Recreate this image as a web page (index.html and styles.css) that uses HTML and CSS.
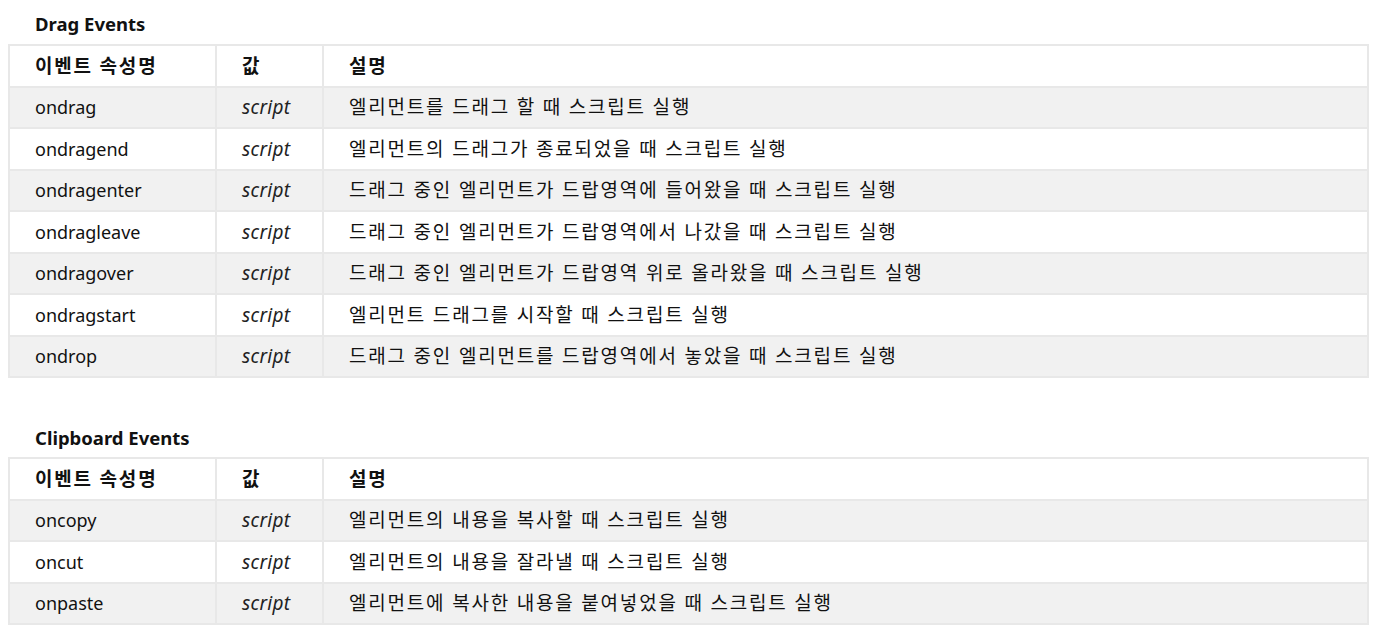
FILE: index.html
```html
<!DOCTYPE html>
<html lang="ko">
<head>
<meta charset="utf-8">
<link rel="stylesheet" href="styles.css">
</head>
<body>
<section class="group">
  <h3 class="title">Drag Events</h3>
  <table class="events">
    <colgroup><col class="c1"><col class="c2"><col></colgroup>
    <thead><tr><th>이벤트 속성명</th><th>값</th><th>설명</th></tr></thead>
    <tbody>
      <tr><td>ondrag</td><td class="val">script</td><td class="desc">엘리먼트를 드래그 할 때 스크립트 실행</td></tr>
      <tr><td>ondragend</td><td class="val">script</td><td class="desc">엘리먼트의 드래그가 종료되었을 때 스크립트 실행</td></tr>
      <tr><td>ondragenter</td><td class="val">script</td><td class="desc">드래그 중인 엘리먼트가 드랍영역에 들어왔을 때 스크립트 실행</td></tr>
      <tr><td>ondragleave</td><td class="val">script</td><td class="desc">드래그 중인 엘리먼트가 드랍영역에서 나갔을 때 스크립트 실행</td></tr>
      <tr><td>ondragover</td><td class="val">script</td><td class="desc">드래그 중인 엘리먼트가 드랍영역 위로 올라왔을 때 스크립트 실행</td></tr>
      <tr><td>ondragstart</td><td class="val">script</td><td class="desc">엘리먼트 드래그를 시작할 때 스크립트 실행</td></tr>
      <tr><td>ondrop</td><td class="val">script</td><td class="desc">드래그 중인 엘리먼트를 드랍영역에서 놓았을 때 스크립트 실행</td></tr>
    </tbody>
  </table>
</section>
<section class="group second">
  <h3 class="title">Clipboard Events</h3>
  <table class="events">
    <colgroup><col class="c1"><col class="c2"><col></colgroup>
    <thead><tr><th>이벤트 속성명</th><th>값</th><th>설명</th></tr></thead>
    <tbody>
      <tr><td>oncopy</td><td class="val">script</td><td class="desc">엘리먼트의 내용을 복사할 때 스크립트 실행</td></tr>
      <tr><td>oncut</td><td class="val">script</td><td class="desc">엘리먼트의 내용을 잘라낼 때 스크립트 실행</td></tr>
      <tr><td>onpaste</td><td class="val">script</td><td class="desc">엘리먼트에 복사한 내용을 붙여넣었을 때 스크립트 실행</td></tr>
    </tbody>
  </table>
</section>
</body>
</html>
```
FILE: styles.css
```css
html, body {
  margin: 0;
  padding: 0;
  background: #fff;
}
body {
  padding: 0 8px;
  font-family: "Noto Sans", "Noto Sans CJK KR", sans-serif;
  font-size: 18px;
  color: #111;
}
.group {
  margin: 0;
}
.title {
  margin: 0;
  padding: 12px 0 0 27px;
  height: 44px;
  box-sizing: border-box;
  font-size: 18.5px;
  font-weight: bold;
  line-height: 24px;
}
.second {
  margin-top: 48px;
}
.second .title {
  padding-top: 0;
  height: 31px;
}
.events {
  width: 1361px;
  border-collapse: collapse;
  table-layout: fixed;
  border: 2px solid #e8e8e8;
}
.c1 { width: 207px; }
.c2 { width: 107px; }
.events th, .events td {
  border: 2px solid #e8e8e8;
  padding: 0 0 0 25px;
  height: 41.5px;
  box-sizing: border-box;
  text-align: left;
  vertical-align: middle;
  line-height: 24px;
  white-space: nowrap;
}
.events th {
  font-weight: bold;
  font-size: 19px;
  letter-spacing: 1.8px;
  background: #fff;
}
.events td.desc {
  font-size: 19px;
  letter-spacing: 1.8px;
}
.events tbody tr:nth-child(odd) td {
  background: #f1f1f1;
}
.events tbody tr:nth-child(even) td {
  background: #fff;
}
.events td.val {
  font-style: italic;
  font-size: 19px;
  letter-spacing: 0.3px;
  color: #222;
}
```
